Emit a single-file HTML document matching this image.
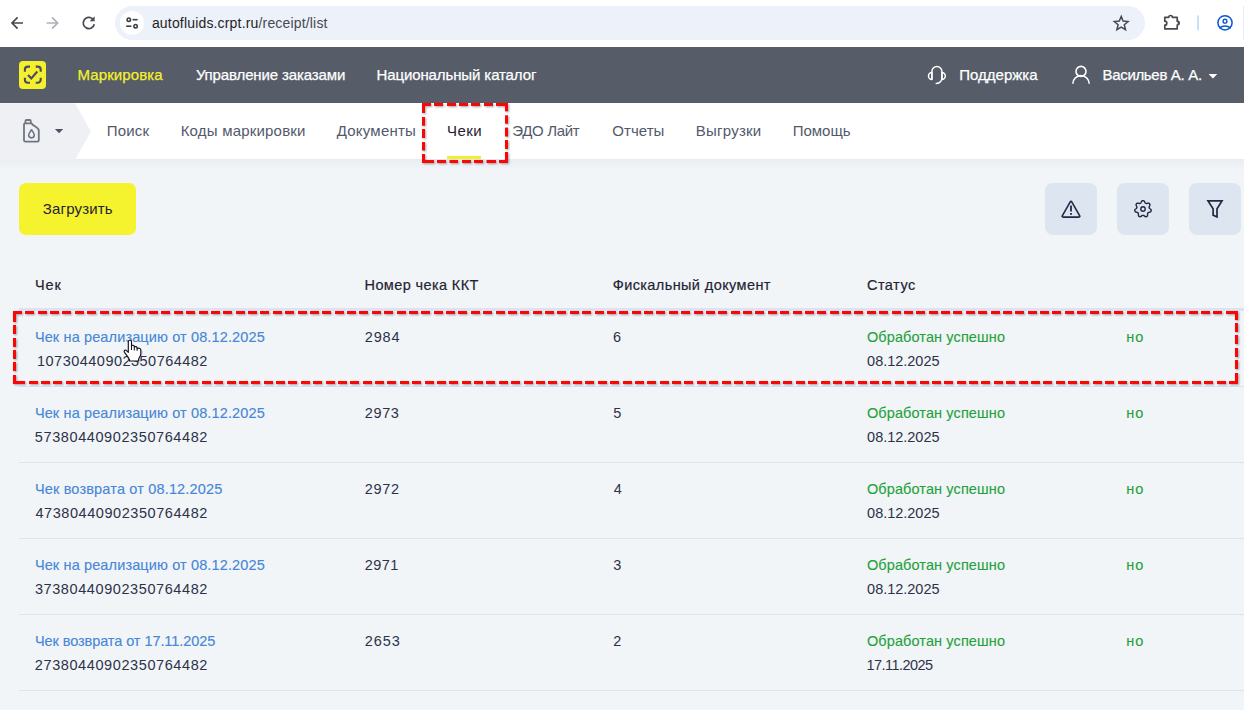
<!DOCTYPE html>
<html lang="ru">
<head>
<meta charset="utf-8">
<title>Чеки</title>
<style>
*{box-sizing:border-box;margin:0;padding:0}
html,body{width:1244px;height:710px;overflow:hidden;background:#f2f5f8;font-family:"Liberation Sans",sans-serif;}
body{position:relative}
.abs{position:absolute}
.t{position:absolute;white-space:nowrap;line-height:20px;height:20px}
#chrome{left:0;top:0;width:1244px;height:47px;background:#fff}
#urlbar{left:115px;top:6px;width:1030px;height:34px;border-radius:17px;background:#edf1fa}
#tune{left:119.8px;top:11px;width:24.2px;height:24.2px;border-radius:50%;background:#fff}
#url{font-size:14px;color:#1f1f1f}
#hdr{left:0;top:47px;width:1244px;height:55.6px;background:#565d68}
#logo{left:19px;top:60.7px;width:27.3px;height:28px;border-radius:4px;background:#f5f02d}
.hn{font-size:15px;color:#fff;-webkit-text-stroke:0.25px currentColor}
#sub{left:0;top:102.6px;width:1244px;height:56.4px;background:#fff}
#subshadow{left:0;top:159px;width:1244px;height:11px;background:linear-gradient(#e9ebee,#eef1f4 45%,#f2f5f8)}
.sn{font-size:15px;color:#52596b}
#load{left:19px;top:183px;width:117px;height:52px;border-radius:7px;background:#f5f32d}
#loadt{font-size:15px;color:#1f2333}
.ib{top:183px;width:52px;height:52px;border-radius:8px;background:#dde5f0}
.th{font-size:14.5px;color:#1f2333;-webkit-text-stroke:0.18px #1f2333}
.ln{left:19px;width:1225px;height:1px;background:#dde4ef}
.lk{font-size:14.5px;color:#4887d6;-webkit-text-stroke:0.15px #4887d6}
.tx{font-size:14.5px;color:#2d3248}
.gr{font-size:14.5px;color:#1fa23b;-webkit-text-stroke:0.12px #1fa23b}
</style>
</head>
<body>
<div class="abs" id="chrome"></div>
<div class="abs" id="urlbar"></div>
<div class="abs" id="tune"></div>
<div class="abs" id="edge" style="left:1243px;top:6px;width:1px;height:33.5px;background:#e6ecfa"></div>
<div class="abs" id="hdr"></div>
<div class="abs" id="logo"></div>
<div class="abs" id="sub"></div>
<div class="abs" id="subshadow"></div>
<svg class="abs" id="arrow" style="left:0;top:102.6px" width="92" height="57" viewBox="0 0 92 56.4"><path d="M0 0H75L91 28.2L75 56.4H0Z" fill="#eef0f3"/></svg>
<div class="abs" id="under" style="left:447px;top:156px;width:34px;height:3px;background:#f5ee2e"></div>
<div class="abs" id="load"></div>
<div class="abs ib" id="ib1" style="left:1045px"></div>
<div class="abs ib" id="ib2" style="left:1117px"></div>
<div class="abs ib" id="ib3" style="left:1189px"></div>
<div class="abs ln" style="top:308px;height:3px"></div>
<div class="abs ln" style="top:386px"></div>
<div class="abs ln" style="top:462px"></div>
<div class="abs ln" style="top:538px"></div>
<div class="abs ln" style="top:614px"></div>
<div class="abs ln" style="top:690px"></div>
<div class="t " id="url" style="left:151.91px;top:13px;letter-spacing:0.171px">autofluids.crpt.ru<span style="color:#474a4f">/receipt/list</span></div>
<div class="t hn" id="h1" style="left:77.59px;top:65px;letter-spacing:0.094px;color:#f5f02d">Маркировка</div>
<div class="t hn" id="h2" style="left:195.90px;top:65px;letter-spacing:-0.129px">Управление заказами</div>
<div class="t hn" id="h3" style="left:376.52px;top:65px;letter-spacing:-0.112px">Национальный каталог</div>
<div class="t hn" id="h4" style="left:959.33px;top:65px;letter-spacing:-0.002px">Поддержка</div>
<div class="t hn" id="h5" style="left:1102.52px;top:65px;letter-spacing:-0.324px">Васильев А. А.</div>
<div class="t sn" id="s1" style="left:106.63px;top:121px;letter-spacing:0.244px">Поиск</div>
<div class="t sn" id="s2" style="left:180.69px;top:121px;letter-spacing:0.199px">Коды маркировки</div>
<div class="t sn" id="s3" style="left:336.65px;top:121px;letter-spacing:0.238px">Документы</div>
<div class="t sn" id="s4" style="left:447.00px;top:121px;letter-spacing:0.432px;color:#1f2333">Чеки</div>
<div class="t sn" id="s5" style="left:512.24px;top:121px;letter-spacing:-0.323px">ЭДО Лайт</div>
<div class="t sn" id="s6" style="left:612.35px;top:121px;letter-spacing:0.042px">Отчеты</div>
<div class="t sn" id="s7" style="left:695.69px;top:121px;letter-spacing:0.257px">Выгрузки</div>
<div class="t sn" id="s8" style="left:792.63px;top:121px;letter-spacing:0.009px">Помощь</div>
<div class="t " id="loadt" style="left:42.84px;top:198.6px;letter-spacing:0.162px">Загрузить</div>
<div class="t th" id="th1" style="left:35.12px;top:275px;letter-spacing:0.834px">Чек</div>
<div class="t th" id="th2" style="left:364.53px;top:275px;letter-spacing:0.391px">Номер чека ККТ</div>
<div class="t th" id="th3" style="left:612.71px;top:275px;letter-spacing:0.403px">Фискальный документ</div>
<div class="t th" id="th4" style="left:866.95px;top:275px;letter-spacing:0.486px">Статус</div>
<div class="t lk" id="r0a" style="left:34.88px;top:327px;letter-spacing:0.129px">Чек на реализацию от 08.12.2025</div>
<div class="t tx" id="r0b" style="left:37.03px;top:350.8px;letter-spacing:0.481px">10730440902350764482</div>
<div class="t tx" id="r0c" style="left:364.84px;top:327px;letter-spacing:0.830px">2984</div>
<div class="t tx" id="r0d" style="left:613.12px;top:327px;letter-spacing:0.000px">6</div>
<div class="t gr" id="r0e" style="left:866.93px;top:327px;letter-spacing:0.109px">Обработан успешно</div>
<div class="t tx" id="r0f" style="left:867.09px;top:350.8px;letter-spacing:-0.012px">08.12.2025</div>
<div class="t gr" id="r0g" style="left:1126.17px;top:327px;letter-spacing:1.031px">но</div>
<div class="t lk" id="r1a" style="left:34.88px;top:403px;letter-spacing:0.129px">Чек на реализацию от 08.12.2025</div>
<div class="t tx" id="r1b" style="left:34.87px;top:426.8px;letter-spacing:0.592px">57380440902350764482</div>
<div class="t tx" id="r1c" style="left:364.84px;top:403px;letter-spacing:0.595px">2973</div>
<div class="t tx" id="r1d" style="left:613.15px;top:403px;letter-spacing:0.000px">5</div>
<div class="t gr" id="r1e" style="left:866.93px;top:403px;letter-spacing:0.109px">Обработан успешно</div>
<div class="t tx" id="r1f" style="left:867.09px;top:426.8px;letter-spacing:-0.012px">08.12.2025</div>
<div class="t gr" id="r1g" style="left:1126.17px;top:403px;letter-spacing:1.031px">но</div>
<div class="t lk" id="r2a" style="left:34.88px;top:479px;letter-spacing:0.166px">Чек возврата от 08.12.2025</div>
<div class="t tx" id="r2b" style="left:35.41px;top:502.8px;letter-spacing:0.564px">47380440902350764482</div>
<div class="t tx" id="r2c" style="left:364.84px;top:479px;letter-spacing:0.634px">2972</div>
<div class="t tx" id="r2d" style="left:613.63px;top:479px;letter-spacing:0.000px">4</div>
<div class="t gr" id="r2e" style="left:866.93px;top:479px;letter-spacing:0.109px">Обработан успешно</div>
<div class="t tx" id="r2f" style="left:867.09px;top:502.8px;letter-spacing:-0.012px">08.12.2025</div>
<div class="t gr" id="r2g" style="left:1126.17px;top:479px;letter-spacing:1.031px">но</div>
<div class="t lk" id="r3a" style="left:34.88px;top:555px;letter-spacing:0.129px">Чек на реализацию от 08.12.2025</div>
<div class="t tx" id="r3b" style="left:34.91px;top:578.8px;letter-spacing:0.590px">37380440902350764482</div>
<div class="t tx" id="r3c" style="left:364.84px;top:555px;letter-spacing:0.370px">2971</div>
<div class="t tx" id="r3d" style="left:613.14px;top:555px;letter-spacing:0.000px">3</div>
<div class="t gr" id="r3e" style="left:866.93px;top:555px;letter-spacing:0.109px">Обработан успешно</div>
<div class="t tx" id="r3f" style="left:867.09px;top:578.8px;letter-spacing:-0.012px">08.12.2025</div>
<div class="t gr" id="r3g" style="left:1126.17px;top:555px;letter-spacing:1.031px">но</div>
<div class="t lk" id="r4a" style="left:34.88px;top:631px;letter-spacing:-0.073px">Чек возврата от 17.11.2025</div>
<div class="t tx" id="r4b" style="left:34.84px;top:654.8px;letter-spacing:0.594px">27380440902350764482</div>
<div class="t tx" id="r4c" style="left:364.84px;top:631px;letter-spacing:0.881px">2653</div>
<div class="t tx" id="r4d" style="left:613.19px;top:631px;letter-spacing:0.000px">2</div>
<div class="t gr" id="r4e" style="left:866.93px;top:631px;letter-spacing:0.109px">Обработан успешно</div>
<div class="t tx" id="r4f" style="left:866.61px;top:654.8px;letter-spacing:-0.573px">17.11.2025</div>
<div class="t gr" id="r4g" style="left:1126.17px;top:631px;letter-spacing:1.031px">но</div>
<svg class="abs" id="icons" style="left:0;top:0" width="1244" height="710" viewBox="0 0 1244 710" fill="none" stroke-linecap="round" stroke-linejoin="round">
<!-- browser chrome icons -->
<g stroke="#474a4f" stroke-width="1.7" stroke-linecap="butt" stroke-linejoin="miter">
  <path d="M23 23H12.2M17.6 17.4L12 23L17.6 28.6"/>
  <path d="M46.6 23H57.4M52 17.4L57.6 23L52 28.6" stroke="#aeb1b8"/>
  <path d="M94.3 24.2A5.6 5.6 0 1 1 92.6 18.8" />
  <path d="M94.6 16.2V21.2H89.6Z" fill="#474a4f" stroke="none"/>
</g>
<g stroke="#3c3f44" stroke-width="1.6" stroke-linecap="butt">
  <circle cx="128.8" cy="19.7" r="1.7"/>
  <path d="M132.6 19.7H137.6"/>
  <path d="M126.2 26.2H131.4"/>
  <circle cx="135.6" cy="26.2" r="1.7"/>
</g>
<path d="M1121.2 16.4L1123.1 21.1L1128.1 21.5L1124.3 24.8L1125.5 29.7L1121.2 27.1L1116.9 29.7L1118.1 24.8L1114.3 21.5L1119.3 21.1Z" stroke="#474a4f" stroke-width="1.5" stroke-linejoin="miter"/>
<path d="M1164.8 17.3H1168.8A1.8 1.8 0 0 1 1172.4 17.3H1177.2V21.2A1.9 1.9 0 0 1 1177.2 25V28.9H1164.8V25.2A2 2 0 0 0 1164.8 21.2Z" stroke="#474a4f" stroke-width="1.7" stroke-linejoin="round"/><path d="M1177.6 21.2A1.9 1.9 0 0 1 1177.6 25Z" fill="#474a4f"/>
<rect x="1197" y="15.2" width="2" height="15.4" rx="1" fill="#c5e2fb"/>
<g stroke="#0b57d0" stroke-width="1.6">
  <circle cx="1225" cy="22.8" r="7.1" stroke-width="1.5"/>
  <circle cx="1225" cy="21.2" r="1.9" stroke-width="1.4"/>
  <path d="M1219.7 27.9C1221.2 26.6 1223 26 1225 26C1227 26 1228.8 26.6 1230.3 27.9" stroke-width="1.4"/>
</g>
<!-- logo -->
<g stroke="#464c64" stroke-width="2.1" stroke-linecap="butt">
  <path d="M24.9 71.7V69.6A3 3 0 0 1 27.9 66.6H30"/>
  <path d="M35.7 66.6H37.7A3 3 0 0 1 40.7 69.6V71.7"/>
  <path d="M40.7 77.7V79.7A3 3 0 0 1 37.7 82.7H35.7"/>
  <path d="M30 82.7H27.9A3 3 0 0 1 24.9 79.7V77.7"/>
  <path d="M28 75L31.3 78.5L37.3 71.5" stroke-linejoin="miter"/>
</g>
<!-- headset -->
<g stroke="#fff" stroke-width="1.5">
  <path d="M931.9 79V71.6A5 5 0 0 1 941.9 71.6V77.2C941.9 80.6 939.8 83.2 936.2 83.4"/>
  <path d="M931.9 72.6A3.4 3.4 0 0 0 931.9 79.4Z"/>
  <path d="M941.9 72.6A3.4 3.4 0 0 1 941.9 79.4Z"/>
</g>
<!-- user -->
<g stroke="#fff" stroke-width="1.6">
  <circle cx="1081" cy="71.4" r="5"/>
  <path d="M1072.8 83.8A8.2 8.2 0 0 1 1089.2 83.8" stroke-linecap="butt"/>
</g>
<path d="M1208.6 74H1217.3L1212.95 78.4Z" fill="#fff"/>
<!-- canister -->
<g stroke="#6f7580" stroke-width="1.8">
  <path d="M24 124.6V140.2A1.4 1.4 0 0 0 25.4 141.6H37.4A1.4 1.4 0 0 0 38.8 140.2V130.6C38.8 127.2 33.6 126.6 31.6 123.4H25.2A1.2 1.2 0 0 0 24 124.6Z"/>
  <path d="M25.4 123.2V121.2A1.2 1.2 0 0 1 26.6 120H29.6A1.2 1.2 0 0 1 30.8 121.2V123.2"/>
  <path d="M31.5 129.8C30.2 131.8 28.7 133.4 28.7 135.1A2.8 2.8 0 0 0 34.3 135.1C34.3 133.4 32.8 131.8 31.5 129.8Z" stroke-width="1.6"/>
</g>
<path d="M54.9 129H63.2L59.05 133.2Z" fill="#4b5262"/>
<!-- toolbar icons -->
<g stroke="#232842" stroke-width="1.7">
  <path d="M1070.1 202.1Q1071 200.6 1071.9 202.1L1079.6 215.6Q1080.4 217.1 1078.8 217.1H1063.2Q1061.6 217.1 1062.4 215.6Z" stroke-width="1.6"/>
  <path d="M1071 205.4V211.4" stroke-linecap="butt" stroke-width="1.8"/>
  <rect x="1070.1" y="213" width="1.8" height="1.8" fill="#232842" stroke="none"/>
  <path d="M1143.00 200.65L1143.31 200.67L1143.62 200.73L1143.92 200.86L1144.19 201.08L1144.44 201.41L1144.64 201.83L1144.80 202.26L1144.97 202.61L1145.15 202.86L1145.34 203.03L1145.54 203.17L1145.76 203.28L1145.97 203.37L1146.21 203.45L1146.46 203.49L1146.77 203.48L1147.14 203.39L1147.58 203.25L1148.04 203.14L1148.45 203.13L1148.79 203.21L1149.08 203.36L1149.32 203.56L1149.53 203.79L1149.71 204.05L1149.85 204.33L1149.94 204.64L1149.94 204.99L1149.83 205.39L1149.62 205.81L1149.39 206.21L1149.22 206.56L1149.14 206.85L1149.13 207.11L1149.15 207.35L1149.19 207.59L1149.25 207.82L1149.34 208.04L1149.47 208.27L1149.67 208.50L1149.97 208.74L1150.35 209.00L1150.72 209.29L1150.99 209.60L1151.14 209.92L1151.20 210.24L1151.19 210.55L1151.14 210.86L1151.05 211.16L1150.92 211.44L1150.73 211.71L1150.46 211.93L1150.08 212.09L1149.62 212.19L1149.17 212.26L1148.79 212.34L1148.51 212.46L1148.30 212.61L1148.12 212.78L1147.96 212.96L1147.82 213.15L1147.70 213.36L1147.60 213.60L1147.55 213.90L1147.55 214.29L1147.58 214.75L1147.59 215.22L1147.51 215.62L1147.36 215.94L1147.14 216.18L1146.90 216.37L1146.62 216.52L1146.33 216.64L1146.03 216.72L1145.71 216.73L1145.36 216.66L1145.00 216.46L1144.64 216.17L1144.30 215.85L1144.00 215.61L1143.73 215.47L1143.48 215.39L1143.24 215.36L1143.00 215.35L1142.76 215.36L1142.52 215.39L1142.27 215.47L1142.00 215.61L1141.70 215.85L1141.36 216.17L1141.00 216.46L1140.64 216.66L1140.29 216.73L1139.97 216.72L1139.67 216.64L1139.38 216.52L1139.10 216.37L1138.86 216.18L1138.64 215.94L1138.49 215.62L1138.41 215.22L1138.42 214.75L1138.45 214.29L1138.45 213.90L1138.40 213.60L1138.30 213.36L1138.18 213.15L1138.04 212.96L1137.88 212.78L1137.70 212.61L1137.49 212.46L1137.21 212.34L1136.83 212.26L1136.38 212.19L1135.92 212.09L1135.54 211.93L1135.27 211.71L1135.08 211.44L1134.95 211.16L1134.86 210.86L1134.81 210.55L1134.80 210.24L1134.86 209.92L1135.01 209.60L1135.28 209.29L1135.65 209.00L1136.03 208.74L1136.33 208.50L1136.53 208.27L1136.66 208.04L1136.75 207.82L1136.81 207.59L1136.85 207.35L1136.87 207.11L1136.86 206.85L1136.78 206.56L1136.61 206.21L1136.38 205.81L1136.17 205.39L1136.06 204.99L1136.06 204.64L1136.15 204.33L1136.29 204.05L1136.47 203.79L1136.68 203.56L1136.92 203.36L1137.21 203.21L1137.55 203.13L1137.96 203.14L1138.42 203.25L1138.86 203.39L1139.23 203.48L1139.54 203.49L1139.79 203.45L1140.03 203.37L1140.24 203.28L1140.46 203.17L1140.66 203.03L1140.85 202.86L1141.03 202.61L1141.20 202.26L1141.36 201.83L1141.56 201.41L1141.81 201.08L1142.08 200.86L1142.38 200.73L1142.69 200.67Z" stroke-width="1.4"/>
  <circle cx="1143" cy="209" r="2.2" stroke-width="1.4"/>
  <path d="M1208 200.9H1222L1217 208.7V217L1213.1 215.1V208.7Z" stroke-linejoin="miter" stroke-linecap="butt" stroke-width="1.7"/>
</g>
<!-- hand cursor -->
<g id="hand">
  <path d="M129 358.5L139.5 361.5L141.5 352" stroke="rgba(60,70,90,.18)" stroke-width="3" fill="none"/>
  <path d="M128.3 341.4C128.3 339.9 131.5 339.9 131.5 341.4V345.9C132 344.9 134.2 345 134.3 346.4V347.2C134.9 346.3 137 346.5 137.1 347.8V348.6C137.8 347.8 140.8 348 140.8 350V354C140.8 356.6 138.7 357.6 138.6 359.4V361H129.5V359.8C128.6 357.6 126.4 355 124.5 352.4C123.6 351.1 124.6 349.6 126 350.2L128.3 352.3Z" fill="#fff" stroke="#10121c" stroke-width="1.15" stroke-linejoin="round"/>
  <path d="M131.5 345.9V350M134.3 347.2V350.4M137.1 348.6V350.8" stroke="#10121c" stroke-width="1.05" stroke-linecap="butt"/>
</g>
</svg>

<svg class="abs" id="reds" style="left:0;top:0;filter:drop-shadow(1px 1px 0.8px rgba(40,50,70,.45))" width="1244" height="710" viewBox="0 0 1244 710" fill="#fb0505">
<rect x="422.00" y="103.00" width="9.00" height="3"/>
<rect x="434.00" y="103.00" width="9.00" height="3"/>
<rect x="447.00" y="103.00" width="9.00" height="3"/>
<rect x="459.00" y="103.00" width="9.00" height="3"/>
<rect x="471.00" y="103.00" width="9.00" height="3"/>
<rect x="484.00" y="103.00" width="9.00" height="3"/>
<rect x="496.00" y="103.00" width="12.00" height="3"/>
<rect x="422.00" y="160.00" width="12.00" height="3"/>
<rect x="437.00" y="160.00" width="9.00" height="3"/>
<rect x="449.50" y="160.00" width="8.50" height="3"/>
<rect x="462.00" y="160.00" width="9.00" height="3"/>
<rect x="474.00" y="160.00" width="9.00" height="3"/>
<rect x="486.50" y="160.00" width="9.50" height="3"/>
<rect x="499.00" y="160.00" width="9.00" height="3"/>
<rect x="422.00" y="103.00" width="3" height="10.00"/>
<rect x="422.00" y="117.00" width="3" height="8.70"/>
<rect x="422.00" y="129.00" width="3" height="9.00"/>
<rect x="422.00" y="142.00" width="3" height="8.50"/>
<rect x="422.00" y="154.00" width="3" height="9.00"/>
<rect x="505.00" y="103.00" width="3" height="8.30"/>
<rect x="505.00" y="115.30" width="3" height="8.40"/>
<rect x="505.00" y="127.60" width="3" height="8.90"/>
<rect x="505.00" y="140.00" width="3" height="9.00"/>
<rect x="505.00" y="152.00" width="3" height="11.00"/>
<rect x="13.00" y="311.00" width="9.00" height="3"/>
<rect x="25.00" y="311.00" width="9.00" height="3"/>
<rect x="38.00" y="311.00" width="9.00" height="3"/>
<rect x="50.00" y="311.00" width="9.00" height="3"/>
<rect x="62.00" y="311.00" width="9.00" height="3"/>
<rect x="75.00" y="311.00" width="9.00" height="3"/>
<rect x="87.00" y="311.00" width="9.00" height="3"/>
<rect x="100.00" y="311.00" width="9.00" height="3"/>
<rect x="112.00" y="311.00" width="9.00" height="3"/>
<rect x="124.00" y="311.00" width="9.00" height="3"/>
<rect x="137.00" y="311.00" width="9.00" height="3"/>
<rect x="149.00" y="311.00" width="9.00" height="3"/>
<rect x="161.00" y="311.00" width="9.00" height="3"/>
<rect x="174.00" y="311.00" width="9.00" height="3"/>
<rect x="186.00" y="311.00" width="9.00" height="3"/>
<rect x="199.00" y="311.00" width="9.00" height="3"/>
<rect x="211.00" y="311.00" width="9.00" height="3"/>
<rect x="223.00" y="311.00" width="9.00" height="3"/>
<rect x="236.00" y="311.00" width="9.00" height="3"/>
<rect x="248.00" y="311.00" width="9.00" height="3"/>
<rect x="260.00" y="311.00" width="9.00" height="3"/>
<rect x="273.00" y="311.00" width="9.00" height="3"/>
<rect x="285.00" y="311.00" width="9.00" height="3"/>
<rect x="298.00" y="311.00" width="9.00" height="3"/>
<rect x="310.00" y="311.00" width="9.00" height="3"/>
<rect x="322.00" y="311.00" width="9.00" height="3"/>
<rect x="335.00" y="311.00" width="9.00" height="3"/>
<rect x="347.00" y="311.00" width="9.00" height="3"/>
<rect x="359.00" y="311.00" width="9.00" height="3"/>
<rect x="372.00" y="311.00" width="9.00" height="3"/>
<rect x="384.00" y="311.00" width="9.00" height="3"/>
<rect x="397.00" y="311.00" width="9.00" height="3"/>
<rect x="409.00" y="311.00" width="9.00" height="3"/>
<rect x="421.00" y="311.00" width="9.00" height="3"/>
<rect x="434.00" y="311.00" width="9.00" height="3"/>
<rect x="446.00" y="311.00" width="9.00" height="3"/>
<rect x="458.00" y="311.00" width="9.00" height="3"/>
<rect x="471.00" y="311.00" width="9.00" height="3"/>
<rect x="483.00" y="311.00" width="9.00" height="3"/>
<rect x="496.00" y="311.00" width="9.00" height="3"/>
<rect x="508.00" y="311.00" width="9.00" height="3"/>
<rect x="520.00" y="311.00" width="9.00" height="3"/>
<rect x="533.00" y="311.00" width="9.00" height="3"/>
<rect x="545.00" y="311.00" width="9.00" height="3"/>
<rect x="557.00" y="311.00" width="9.00" height="3"/>
<rect x="570.00" y="311.00" width="9.00" height="3"/>
<rect x="582.00" y="311.00" width="9.00" height="3"/>
<rect x="595.00" y="311.00" width="9.00" height="3"/>
<rect x="607.00" y="311.00" width="9.00" height="3"/>
<rect x="619.00" y="311.00" width="9.00" height="3"/>
<rect x="632.00" y="311.00" width="9.00" height="3"/>
<rect x="644.00" y="311.00" width="9.00" height="3"/>
<rect x="656.00" y="311.00" width="9.00" height="3"/>
<rect x="669.00" y="311.00" width="9.00" height="3"/>
<rect x="681.00" y="311.00" width="9.00" height="3"/>
<rect x="694.00" y="311.00" width="9.00" height="3"/>
<rect x="706.00" y="311.00" width="9.00" height="3"/>
<rect x="718.00" y="311.00" width="9.00" height="3"/>
<rect x="731.00" y="311.00" width="9.00" height="3"/>
<rect x="743.00" y="311.00" width="9.00" height="3"/>
<rect x="755.00" y="311.00" width="9.00" height="3"/>
<rect x="768.00" y="311.00" width="9.00" height="3"/>
<rect x="780.00" y="311.00" width="9.00" height="3"/>
<rect x="793.00" y="311.00" width="9.00" height="3"/>
<rect x="805.00" y="311.00" width="9.00" height="3"/>
<rect x="817.00" y="311.00" width="9.00" height="3"/>
<rect x="830.00" y="311.00" width="9.00" height="3"/>
<rect x="842.00" y="311.00" width="9.00" height="3"/>
<rect x="854.00" y="311.00" width="9.00" height="3"/>
<rect x="867.00" y="311.00" width="9.00" height="3"/>
<rect x="879.00" y="311.00" width="9.00" height="3"/>
<rect x="892.00" y="311.00" width="9.00" height="3"/>
<rect x="904.00" y="311.00" width="9.00" height="3"/>
<rect x="916.00" y="311.00" width="9.00" height="3"/>
<rect x="929.00" y="311.00" width="9.00" height="3"/>
<rect x="941.00" y="311.00" width="9.00" height="3"/>
<rect x="953.00" y="311.00" width="9.00" height="3"/>
<rect x="966.00" y="311.00" width="9.00" height="3"/>
<rect x="978.00" y="311.00" width="9.00" height="3"/>
<rect x="991.00" y="311.00" width="9.00" height="3"/>
<rect x="1003.00" y="311.00" width="9.00" height="3"/>
<rect x="1015.00" y="311.00" width="9.00" height="3"/>
<rect x="1028.00" y="311.00" width="9.00" height="3"/>
<rect x="1040.00" y="311.00" width="9.00" height="3"/>
<rect x="1052.00" y="311.00" width="9.00" height="3"/>
<rect x="1065.00" y="311.00" width="9.00" height="3"/>
<rect x="1077.00" y="311.00" width="9.00" height="3"/>
<rect x="1090.00" y="311.00" width="9.00" height="3"/>
<rect x="1102.00" y="311.00" width="9.00" height="3"/>
<rect x="1114.00" y="311.00" width="9.00" height="3"/>
<rect x="1127.00" y="311.00" width="9.00" height="3"/>
<rect x="1139.00" y="311.00" width="9.00" height="3"/>
<rect x="1151.00" y="311.00" width="9.00" height="3"/>
<rect x="1164.00" y="311.00" width="9.00" height="3"/>
<rect x="1176.00" y="311.00" width="9.00" height="3"/>
<rect x="1189.00" y="311.00" width="9.00" height="3"/>
<rect x="1201.00" y="311.00" width="9.00" height="3"/>
<rect x="1213.00" y="311.00" width="9.00" height="3"/>
<rect x="1226.00" y="311.00" width="12.00" height="3"/>
<rect x="13.00" y="381.00" width="12.00" height="3"/>
<rect x="29.00" y="381.00" width="9.00" height="3"/>
<rect x="41.00" y="381.00" width="9.00" height="3"/>
<rect x="53.00" y="381.00" width="9.00" height="3"/>
<rect x="66.00" y="381.00" width="9.00" height="3"/>
<rect x="78.00" y="381.00" width="9.00" height="3"/>
<rect x="90.00" y="381.00" width="9.00" height="3"/>
<rect x="103.00" y="381.00" width="9.00" height="3"/>
<rect x="115.00" y="381.00" width="9.00" height="3"/>
<rect x="128.00" y="381.00" width="9.00" height="3"/>
<rect x="140.00" y="381.00" width="9.00" height="3"/>
<rect x="152.00" y="381.00" width="9.00" height="3"/>
<rect x="165.00" y="381.00" width="9.00" height="3"/>
<rect x="177.00" y="381.00" width="9.00" height="3"/>
<rect x="189.00" y="381.00" width="9.00" height="3"/>
<rect x="202.00" y="381.00" width="9.00" height="3"/>
<rect x="214.00" y="381.00" width="9.00" height="3"/>
<rect x="227.00" y="381.00" width="9.00" height="3"/>
<rect x="239.00" y="381.00" width="9.00" height="3"/>
<rect x="251.00" y="381.00" width="9.00" height="3"/>
<rect x="264.00" y="381.00" width="9.00" height="3"/>
<rect x="276.00" y="381.00" width="9.00" height="3"/>
<rect x="288.00" y="381.00" width="9.00" height="3"/>
<rect x="301.00" y="381.00" width="9.00" height="3"/>
<rect x="313.00" y="381.00" width="9.00" height="3"/>
<rect x="326.00" y="381.00" width="9.00" height="3"/>
<rect x="338.00" y="381.00" width="9.00" height="3"/>
<rect x="350.00" y="381.00" width="9.00" height="3"/>
<rect x="363.00" y="381.00" width="9.00" height="3"/>
<rect x="375.00" y="381.00" width="9.00" height="3"/>
<rect x="387.00" y="381.00" width="9.00" height="3"/>
<rect x="400.00" y="381.00" width="9.00" height="3"/>
<rect x="412.00" y="381.00" width="9.00" height="3"/>
<rect x="425.00" y="381.00" width="9.00" height="3"/>
<rect x="437.00" y="381.00" width="9.00" height="3"/>
<rect x="449.00" y="381.00" width="9.00" height="3"/>
<rect x="462.00" y="381.00" width="9.00" height="3"/>
<rect x="474.00" y="381.00" width="9.00" height="3"/>
<rect x="486.00" y="381.00" width="9.00" height="3"/>
<rect x="499.00" y="381.00" width="9.00" height="3"/>
<rect x="511.00" y="381.00" width="9.00" height="3"/>
<rect x="524.00" y="381.00" width="9.00" height="3"/>
<rect x="536.00" y="381.00" width="9.00" height="3"/>
<rect x="548.00" y="381.00" width="9.00" height="3"/>
<rect x="561.00" y="381.00" width="9.00" height="3"/>
<rect x="573.00" y="381.00" width="9.00" height="3"/>
<rect x="585.00" y="381.00" width="9.00" height="3"/>
<rect x="598.00" y="381.00" width="9.00" height="3"/>
<rect x="610.00" y="381.00" width="9.00" height="3"/>
<rect x="623.00" y="381.00" width="9.00" height="3"/>
<rect x="635.00" y="381.00" width="9.00" height="3"/>
<rect x="647.00" y="381.00" width="9.00" height="3"/>
<rect x="660.00" y="381.00" width="9.00" height="3"/>
<rect x="672.00" y="381.00" width="9.00" height="3"/>
<rect x="684.00" y="381.00" width="9.00" height="3"/>
<rect x="697.00" y="381.00" width="9.00" height="3"/>
<rect x="709.00" y="381.00" width="9.00" height="3"/>
<rect x="722.00" y="381.00" width="9.00" height="3"/>
<rect x="734.00" y="381.00" width="9.00" height="3"/>
<rect x="746.00" y="381.00" width="9.00" height="3"/>
<rect x="759.00" y="381.00" width="9.00" height="3"/>
<rect x="771.00" y="381.00" width="9.00" height="3"/>
<rect x="783.00" y="381.00" width="9.00" height="3"/>
<rect x="796.00" y="381.00" width="9.00" height="3"/>
<rect x="808.00" y="381.00" width="9.00" height="3"/>
<rect x="821.00" y="381.00" width="9.00" height="3"/>
<rect x="833.00" y="381.00" width="9.00" height="3"/>
<rect x="845.00" y="381.00" width="9.00" height="3"/>
<rect x="858.00" y="381.00" width="9.00" height="3"/>
<rect x="870.00" y="381.00" width="9.00" height="3"/>
<rect x="882.00" y="381.00" width="9.00" height="3"/>
<rect x="895.00" y="381.00" width="9.00" height="3"/>
<rect x="907.00" y="381.00" width="9.00" height="3"/>
<rect x="920.00" y="381.00" width="9.00" height="3"/>
<rect x="932.00" y="381.00" width="9.00" height="3"/>
<rect x="944.00" y="381.00" width="9.00" height="3"/>
<rect x="957.00" y="381.00" width="9.00" height="3"/>
<rect x="969.00" y="381.00" width="9.00" height="3"/>
<rect x="981.00" y="381.00" width="9.00" height="3"/>
<rect x="994.00" y="381.00" width="9.00" height="3"/>
<rect x="1006.00" y="381.00" width="9.00" height="3"/>
<rect x="1019.00" y="381.00" width="9.00" height="3"/>
<rect x="1031.00" y="381.00" width="9.00" height="3"/>
<rect x="1043.00" y="381.00" width="9.00" height="3"/>
<rect x="1056.00" y="381.00" width="9.00" height="3"/>
<rect x="1068.00" y="381.00" width="9.00" height="3"/>
<rect x="1080.00" y="381.00" width="9.00" height="3"/>
<rect x="1093.00" y="381.00" width="9.00" height="3"/>
<rect x="1105.00" y="381.00" width="9.00" height="3"/>
<rect x="1118.00" y="381.00" width="9.00" height="3"/>
<rect x="1130.00" y="381.00" width="9.00" height="3"/>
<rect x="1142.00" y="381.00" width="9.00" height="3"/>
<rect x="1155.00" y="381.00" width="9.00" height="3"/>
<rect x="1167.00" y="381.00" width="9.00" height="3"/>
<rect x="1179.00" y="381.00" width="9.00" height="3"/>
<rect x="1192.00" y="381.00" width="9.00" height="3"/>
<rect x="1204.00" y="381.00" width="9.00" height="3"/>
<rect x="1217.00" y="381.00" width="9.00" height="3"/>
<rect x="1229.00" y="381.00" width="9.00" height="3"/>
<rect x="13.00" y="311.00" width="3" height="11.00"/>
<rect x="13.00" y="325.00" width="3" height="9.00"/>
<rect x="13.00" y="338.00" width="3" height="9.00"/>
<rect x="13.00" y="350.00" width="3" height="9.00"/>
<rect x="13.00" y="362.00" width="3" height="9.00"/>
<rect x="13.00" y="375.00" width="3" height="9.00"/>
<rect x="1235.00" y="311.00" width="3" height="9.00"/>
<rect x="1235.00" y="323.00" width="3" height="9.00"/>
<rect x="1235.00" y="335.00" width="3" height="9.00"/>
<rect x="1235.00" y="348.00" width="3" height="9.00"/>
<rect x="1235.00" y="360.00" width="3" height="9.00"/>
<rect x="1235.00" y="373.00" width="3" height="11.00"/>
</svg>
</body>
</html>
